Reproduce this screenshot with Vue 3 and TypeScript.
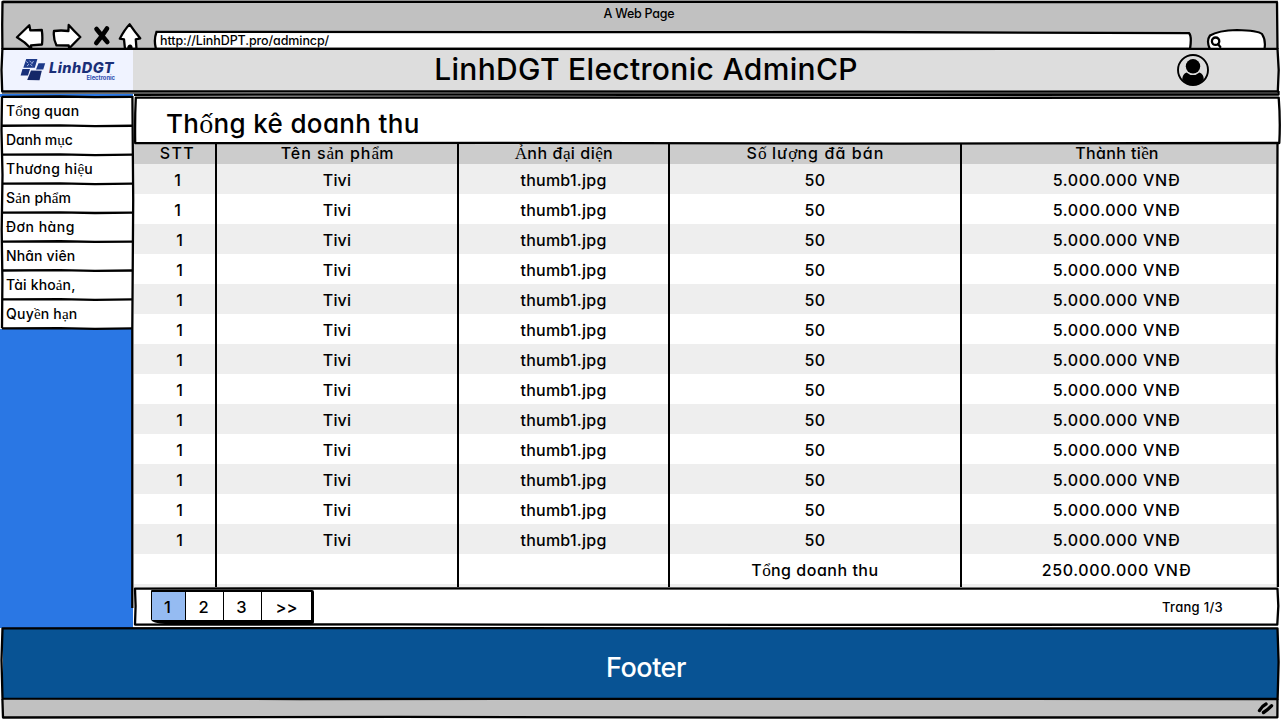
<script setup lang="ts">
import { h, type FunctionalComponent } from 'vue'

/** Letters with stacked Vietnamese marks are set in the serif fallback face. */
const Label: FunctionalComponent<{ text: string; gap?: number }> = ({ text, gap = 0 }) =>
  h(
    'span',
    { class: 'label', style: { letterSpacing: `${gap}px` } },
    text
      .split(/([\u1ea0-\u1ef9])/)
      .map((part, i) => (i % 2 ? h('span', { class: 'marked' }, part) : part)),
  )
Label.props = ['text', 'gap']

interface Caption {
  text: string
  gap: number
  shift?: number
}

const menu: Caption[] = [
  { text: 'Tổng quan', gap: 0.2 },
  { text: 'Danh mục', gap: -0.1 },
  { text: 'Thương hiệu', gap: 0.5 },
  { text: 'Sản phẩm', gap: 0.15 },
  { text: 'Đơn hàng', gap: 0.5 },
  { text: 'Nhân viên', gap: 0.15 },
  { text: 'Tài khoản,', gap: 0.17 },
  { text: 'Quyền hạn', gap: 0.25 },
]

const columns: Caption[] = [
  { text: 'STT', gap: 1.4, shift: 5 },
  { text: 'Tên sản phẩm', gap: 0.95, shift: 1 },
  { text: 'Ảnh đại diện', gap: 0.6, shift: 1 },
  { text: 'Số lượng đã bán', gap: 1.1, shift: 1 },
  { text: 'Thành tiền', gap: 0.38, shift: -4 },
]

const cells: Caption[] = [
  { text: '1', gap: 0 },
  { text: 'Tivi', gap: 0.15 },
  { text: 'thumb1.jpg', gap: 0.25 },
  { text: '50', gap: 0.3 },
  { text: '5.000.000 VNĐ', gap: 0.62 },
]

const total: Caption[] = [
  { text: '', gap: 0 },
  { text: '', gap: 0 },
  { text: '', gap: 0 },
  { text: 'Tổng doanh thu', gap: 0.52 },
  { text: '250.000.000 VNĐ', gap: 0.66 },
]

const rows: Caption[][] = [...Array.from({ length: 13 }, () => cells), total]
const pages = ['1', '2', '3', '>>']
const dividers = [216, 458, 669, 961]
const menuLines = Array.from({ length: 9 }, (_, i) => 96.8 + i * 28.95)
</script>

<template>
  <div class="window">
    <div class="chrome">
      <div class="caption"><Label text="A Web Page" :gap="-0.25" /></div>
      <div class="toolbar">
        <svg class="tools" width="151" height="28" viewBox="0 20 151 28">
          <g fill="#fff" stroke="#000" stroke-width="2.3" stroke-linejoin="round" stroke-linecap="round">
            <path d="M17 37.3 L29.3 25.2 L30.3 30.3 L41.8 30 Q42.8 37 42 44.5 L31 45.3 L31.3 49 Q25 42 17 37.3Z" />
            <path d="M54 31 Q61 30 68.4 31 L68.7 25 Q74 31 80.3 37 L70 47.5 L69.3 49 L68.7 45.5 L56.5 45.4 Q53 38 54 31Z" />
            <path d="M129.7 24.3 Q135 32 140.2 38.3 L135.8 39.3 L136.5 49 L125 49 L124 39.4 L119.8 38.7 Q125 29 129.7 24.3Z" />
            <path d="M128.2 49 Q127.8 45.5 130 45.3 Q132 45.5 131.7 49Z" fill="#000" stroke-width="1.8" />
          </g>
          <path d="M96.5 29 Q100.5 34 107.3 42 M107 28.5 Q103 35 96.3 43" fill="none" stroke="#000" stroke-width="4.6" stroke-linecap="round" />
        </svg>
        <div class="address">
          <svg class="address-ink" width="1040" height="20" viewBox="153 29 1040 20">
            <path d="M156 49 Q153.5 40 156.5 31.8 L520 32.2 L860 32 L1189 33.2 Q1192 36 1190 49Z" fill="#fff" stroke="#000" stroke-width="2.3" />
          </svg>
          <Label text="http://LinhDPT.pro/admincp/" :gap="-0.09" />
        </div>
        <svg class="search" width="62" height="20" viewBox="1205 28 62 20">
          <path d="M1210 49 Q1206 41 1210 35.5 Q1218 30.5 1237 30 Q1258 30.5 1262 34 Q1266 40 1264.5 49Z" fill="#fff" stroke="#000" stroke-width="2.2" />
          <circle cx="1215.6" cy="41.2" r="3.7" fill="#fff" stroke="#000" stroke-width="2.3" />
          <path d="M1218 44 L1220.3 47" stroke="#000" stroke-width="2.2" stroke-linecap="round" />
        </svg>
      </div>
    </div>

    <header class="header">
      <div class="brand">
        <svg class="mark" width="26" height="24" viewBox="20 58 26 24">
          <g fill="#1d3a8a">
            <path d="M26.2 59 L37.4 59 L34.8 67.8 L23.3 67.8Z" />
            <path d="M38.5 63.3 L45.2 63.3 L43.2 69.5 L36 69.5Z" />
            <path d="M22.5 69 L30 69 L28 75.5 L20.6 75.5Z" fill="#18307a" />
            <path d="M31 70.5 L41.8 70.7 L39.5 80.2 L27.2 79.9Z" fill="#142768" />
          </g>
          <path
            d="M26.2 61.5 l2 1.5 M29.5 61 l2.2 1.5 M33.5 61 l-1.8 3 M27 66 l2 -1.8 M30.3 64 l2 2.2"
            stroke="#c3cdf0"
            stroke-width=".8"
            fill="none"
          />
        </svg>
        <div class="wordmark">
          <span class="word">LinhDGT</span>
          <span class="sub">Electronic</span>
        </div>
      </div>
      <h1><Label text="LinhDGT Electronic AdminCP" :gap="0.32" /></h1>
      <svg class="avatar" width="32" height="32" viewBox="0 0 32 32">
        <circle cx="16" cy="16" r="15" fill="none" stroke="#000" stroke-width="1.9" />
        <circle cx="16" cy="12.3" r="7.2" />
        <path d="M5.2 25.5 Q5.5 19.8 9.5 18.4 Q16 23.8 22.5 18.4 Q26.7 19.8 26.8 25.5 Q22.5 31 16 31 Q9.5 31 5.2 25.5Z" />
      </svg>
    </header>

    <main class="main">
      <nav class="sidebar">
        <a v-for="item in menu" :key="item.text" class="item"><Label :text="item.text" :gap="item.gap" /></a>
      </nav>
      <section class="content">
        <h2><Label text="Thống kê doanh thu" :gap="0.36" /></h2>
        <div class="grid head">
          <div v-for="c in columns" :key="c.text" class="cell" :style="{ paddingLeft: `${8 + (c.shift ?? 0)}px` }">
            <Label :text="c.text" :gap="c.gap" />
          </div>
        </div>
        <div v-for="(row, r) in rows" :key="r" class="grid row" :class="{ striped: r % 2 === 0, early: r < 2 }">
          <div v-for="(c, i) in row" :key="i" class="cell"><Label :text="c.text" :gap="c.gap" /></div>
        </div>
        <div class="rest"></div>
        <div class="pager">
          <div class="pages">
            <span v-for="(p, i) in pages" :key="p" class="page" :class="{ current: i === 0 }">{{ p }}</span>
          </div>
          <Label text="Trang 1/3" :gap="0.3" />
        </div>
      </section>
    </main>

    <footer class="footer"><Label text="Footer" :gap="-0.5" /></footer>
    <div class="status">
      <svg width="18" height="14" viewBox="0 0 18 14">
        <path d="M2.5 9.5 Q5 5 9 3 M6.5 11.5 Q11 8.5 14.5 4.8" fill="none" stroke="#000" stroke-width="3.4" stroke-linecap="round" />
      </svg>
    </div>

    <svg class="ink" width="1281" height="720" viewBox="0 0 1281 720">
      <g fill="none" stroke="#000" stroke-width="2.3" stroke-linejoin="round">
        <path d="M2.4 49 L2.2 25 L2.5 2 L640 1.8 L1277 2.2 L1277.5 49" />
        <path d="M2.4 48.8 L300 48.8 L780 49 L1277.5 48.8 L1278.7 70 L1277.8 91.5 L760 91.7 L300 91.3 L2.2 91.5 L1.5 70Z" />
        <path d="M134 94.8 L400 94.6 L760 95 L1278.5 94.5 L1278.5 91" />
        <path d="M2 93.2 L1278 93.4" stroke="#333" stroke-width="1" />
        <path d="M135.8 97.6 L500 97.5 L900 97.8 L1278.7 97.6 Q1280.5 120 1279.3 143 L900 143.6 L500 142.9 L135.2 143.2 Q134.8 118 135.8 97.6Z" />
        <path d="M1277.5 143 L1276.9 360 L1277.9 587" />
        <path d="M132.4 96 L133.2 200 L132.3 330 L132.3 608" />
        <path d="M2 96.5 L1.5 130 L2.5 175 L1.7 230 L2.4 280 L2 328.3" />
        <path v-for="y in menuLines" :key="y" :d="`M2 ${y} L60 ${y - 0.3} L95 ${y + 0.4} L132.5 ${y}`" />
        <path v-for="x in dividers" :key="x" :d="`M${x} 144 L${x} 587`" stroke-width="2" />
        <path d="M135 588.6 L500 588.3 L820 588.7 L1277.5 588.7 L1278.3 606 L1277.3 624.6 L800 624.9 L400 624.4 L135 624.6 L135.6 606Z" />
        <path d="M2.5 628.3 L500 628.1 L900 628.5 L1277.5 628.3 L1278.6 662 L1277.6 699 L700 698.8 L300 699 L2.5 698.6 L1.5 660Z" />
        <path d="M2.4 699 L3 717.5 L400 716.8 L800 717.7 L1277.4 717.3 L1277.5 699" />
      </g>
    </svg>
  </div>
</template>

<style>
body {
  background: #fff;
}
</style>

<style scoped>
.window {
  position: relative;
  display: flex;
  flex-direction: column;
  width: 1281px;
  height: 720px;
  overflow: hidden;
  background: #fff;
  color: #000;
  font-family: Inter, 'Open Sans', sans-serif;
  font-feature-settings: 'cv11';
  font-weight: 450;
}
.window :deep(.label) {
  white-space: pre;
}
.window :deep(.marked) {
  font-family: 'Liberation Serif', serif;
  font-size: 1.08em;
  font-weight: 400;
  letter-spacing: 0;
  line-height: 0;
}
svg {
  display: block;
  flex: none;
}
.chrome {
  height: 48px;
  margin: 0 3px;
  overflow: hidden;
  background: #c1c1c1;
}
.caption {
  height: 28px;
  line-height: 27px;
  text-align: center;
  font-size: 12.5px;
  padding-right: 3px;
}
.toolbar {
  display: flex;
  align-items: flex-end;
  height: 20px;
}
.tools {
  margin-left: -3px;
}
.address {
  position: relative;
  width: 1040px;
  height: 20px;
  margin-left: 2px;
  padding-left: 7px;
  box-sizing: border-box;
  font-size: 12.5px;
  line-height: 26px;
}
.address-ink {
  position: absolute;
  left: 0;
  top: 1px;
}
.address :deep(.label) {
  position: relative;
}
.search {
  margin-left: 12px;
}
.header {
  display: flex;
  align-items: center;
  height: 44px;
  margin: 0 3px;
  box-sizing: border-box;
  background: #ddd;
}
.brand {
  display: flex;
  flex: none;
  width: 130px;
  height: 44px;
  padding: 10px 0 0 17px;
  box-sizing: border-box;
  background: #f0f3ff;
  color: #1b2f78;
}
.wordmark {
  display: flex;
  flex-direction: column;
  width: 66px;
  margin-left: 3px;
  padding-top: 2px;
}
.word {
  font-size: 14.5px;
  font-weight: 800;
  font-style: italic;
  line-height: 15px;
  letter-spacing: 0.5px;
}
.sub {
  align-self: flex-end;
  font-size: 5.8px;
  font-weight: 700;
  line-height: 6px;
  color: #2c4bb0;
}
h1 {
  flex: 1;
  margin: 0;
  padding: 0 51px 2px 0;
  text-align: center;
  font-size: 30px;
  font-weight: 450;
  line-height: 40px;
}
.avatar {
  margin: 0 69px 0 -33px;
}
.main {
  display: flex;
  height: 534px;
  margin-top: 2px;
}
.sidebar {
  flex: none;
  width: 133px;
  padding-top: 3px;
  box-sizing: border-box;
  background: #2a77e4;
}
.item {
  display: block;
  height: 29px;
  padding-left: 6px;
  box-sizing: border-box;
  background: #fff;
  font-size: 14px;
  line-height: 28px;
}
.content {
  flex: none;
  display: flex;
  flex-direction: column;
  width: 1143px;
  margin-left: 1px;
}
h2 {
  height: 50px;
  margin: 0;
  padding: 3px 0 0 32px;
  box-sizing: border-box;
  font-size: 26px;
  font-weight: 450;
  line-height: 53px;
}
.grid {
  display: grid;
  grid-template-columns: 82px 242px 211px 292px 316px;
  flex: none;
  font-size: 16px;
  text-align: center;
}
.head {
  height: 20px;
  overflow: hidden;
  background: #ccc;
  line-height: 19px;
}
.head .cell {
  padding-right: 8px;
}
.row {
  height: 30px;
  line-height: 32px;
  background: #fff;
}
.row.striped {
  background: #eee;
}
.row .cell:first-child {
  padding-left: 9px;
}
.row.early .cell:first-child {
  padding-left: 5px;
}
.row .cell:last-child {
  padding-right: 5px;
}
.rest {
  height: 4px;
  background: #eee;
}
.pager {
  display: flex;
  justify-content: space-between;
  align-items: center;
  flex: none;
  height: 38px;
  padding: 0 54px 0 17px;
  box-sizing: border-box;
  background: #fff;
  font-size: 13px;
}
.pages {
  display: flex;
  height: 34px;
  padding: 2px 2px 4px 1px;
  box-sizing: border-box;
  border-radius: 1px 2px 2px 14px / 1px 2px 2px 5px;
  background: #000;
  font-size: 16.5px;
  line-height: 30px;
}
.page {
  width: 37px;
  margin-right: 1px;
  padding-right: 2px;
  box-sizing: border-box;
  background: #fff;
  text-align: center;
}
.page:first-child {
  width: 33px;
}
.page:last-child {
  width: 49px;
  padding-right: 0;
}
.page.current {
  background: #95bbf2;
}
.footer {
  flex: none;
  height: 71px;
  margin: 0 3px;
  background: #085394;
  color: #fff;
  text-align: center;
  font-size: 27px;
  font-weight: 550;
  line-height: 79px;
}
.footer :deep(.label) {
  margin-left: 11px;
}
.status {
  display: flex;
  justify-content: flex-end;
  flex: none;
  height: 18px;
  margin: 0 3px;
  padding: 2px 3px 0 0;
  box-sizing: border-box;
  background: #c1c1c1;
}
.ink {
  position: absolute;
  inset: 0;
  pointer-events: none;
}
</style>
